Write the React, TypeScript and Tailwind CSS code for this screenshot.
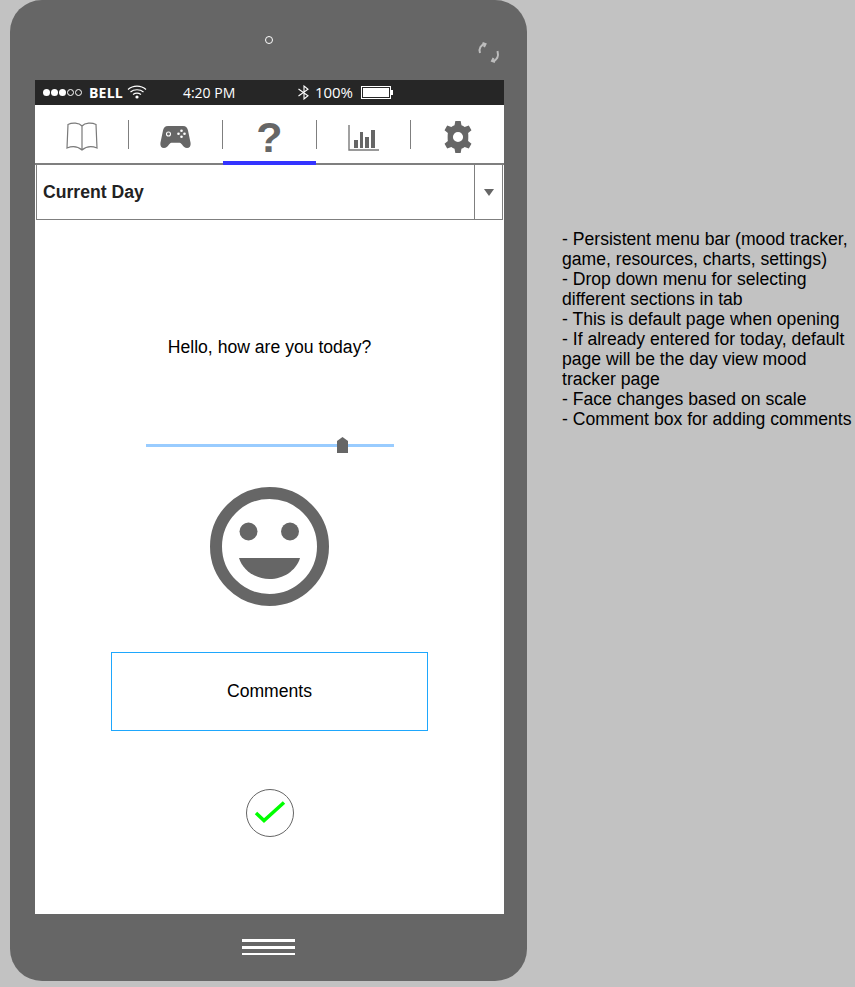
import React from "react";

const arial = "font-['Liberation_Sans',Arial,sans-serif]";

const TabDivider = () => <div className="w-px h-[29px] bg-[#7f7f7f] self-start mt-[15px]" />;

const StatusBar = () => (
  <div className="h-[25px] bg-[#262626] flex items-center text-white shrink-0">
    <div className="flex items-center gap-[1px] ml-[8px]">
      <span className="w-[7px] h-[7px] rounded-full bg-white" />
      <span className="w-[7px] h-[7px] rounded-full bg-white" />
      <span className="w-[7px] h-[7px] rounded-full bg-white" />
      <span className="w-[7px] h-[7px] rounded-full border border-white" />
      <span className="w-[7px] h-[7px] rounded-full border border-white" />
    </div>
    <span className="ml-[7px] text-[14px] font-bold font-['Open_Sans',sans-serif] leading-none tracking-[0.2px]">BELL</span>
    <svg className="ml-[4px] -mt-[2px]" width="20" height="15" viewBox="0 0 20 15" fill="none" stroke="#fff">
      <path d="M1 5.5C6 1 14 1 19 5.5" strokeWidth="1.2" />
      <path d="M3.5 8C7 5 13 5 16.5 8" strokeWidth="1.2" />
      <path d="M6 10.5C8.5 8.8 11.5 8.8 14 10.5" strokeWidth="1.2" />
      <circle cx="10" cy="13" r="1.6" fill="#fff" stroke="none" />
    </svg>
    <span className="ml-[36px] w-[70px] text-[14px] font-['Open_Sans',sans-serif] leading-none">4:20 PM</span>
    <svg className="ml-[44px]" width="14" height="15" viewBox="0 0 14 15" fill="none" stroke="#fff" strokeWidth="1.1">
      <path d="M1.5 4L11 10.8L7 14V1L11 4.2L1.5 11" />
    </svg>
    <span className="ml-[4px] text-[15px] font-['Open_Sans',sans-serif] leading-none">100%</span>
    <div className="ml-[8px] w-[30px] h-[13px] border border-white bg-[#262626] p-[1px]">
      <div className="w-full h-full bg-white" />
    </div>
    <div className="w-[2px] h-[5px] bg-white" />
  </div>
);

const BookIcon = () => (
  <svg width="32" height="32" viewBox="0 0 32 32" fill="none" stroke="#7a7a7a" strokeWidth="1.2">
    <path d="M16 6C13 2.5 6 2.5 2 4.5L1 28C6 26 12 26.5 16 30C20 26.5 26 26 31 28L30 4.5C26 2.5 19 2.5 16 6V30" />
  </svg>
);

const GamepadIcon = () => (
  <svg width="31" height="24" viewBox="0 0 31 24">
    <path fill="#666" d="M8 1H23C26 1 27.5 3 28 5.5L30.6 18C31 21 29.5 23 27 23C24.8 23 23.5 21.5 22 19.5C21 18.2 20 17.8 18.5 17.8H12.5C11 17.8 10 18.2 9 19.5C7.5 21.5 6.2 23 4 23C1.5 23 0 21 .4 18L3 5.5C3.5 3 5 1 8 1Z" />
    <circle cx="8.5" cy="9" r="2" fill="none" stroke="#fff" strokeWidth="1.1" />
    <circle cx="21.5" cy="5.8" r="1.3" fill="#fff" />
    <circle cx="21.5" cy="11.8" r="1.3" fill="#fff" />
    <circle cx="18.5" cy="8.8" r="1.3" fill="#fff" />
    <circle cx="24.5" cy="8.8" r="1.3" fill="#fff" />
  </svg>
);

const ChartIcon = () => (
  <svg width="31" height="26" viewBox="0 0 31 26">
    <path d="M1 0V25H31" fill="none" stroke="#7a7a7a" strokeWidth="1.4" />
    <rect x="6" y="15" width="4" height="8" fill="#666" />
    <rect x="12" y="7" width="3" height="16" fill="#666" />
    <rect x="17" y="12" width="4" height="11" fill="#666" />
    <rect x="23" y="5" width="4" height="18" fill="#666" />
  </svg>
);

const GearIcon = () => (
  <svg width="32" height="32" viewBox="0 0 24 24">
    <path fill="#666" fillRule="evenodd" d="M10 0H14L14.6 3.2C15.5 3.5 16.3 3.9 17 4.5L20.1 3.4L22.1 6.9L19.6 9C19.8 10 19.8 14 19.6 15L22.1 17.1L20.1 20.6L17 19.5C16.3 20.1 15.5 20.5 14.6 20.8L14 24H10L9.4 20.8C8.5 20.5 7.7 20.1 7 19.5L3.9 20.6L1.9 17.1L4.4 15C4.2 14 4.2 10 4.4 9L1.9 6.9L3.9 3.4L7 4.5C7.7 3.9 8.5 3.5 9.4 3.2ZM12 8.2A3.8 3.8 0 1 0 12 15.8A3.8 3.8 0 1 0 12 8.2Z" />
  </svg>
);

const TabBar = () => (
  <div className="h-[60px] bg-white border-b-[2px] border-[#7f7f7f] flex shrink-0 relative">
    <div className="w-[93px] flex justify-center pt-[15px]"><BookIcon /></div>
    <TabDivider />
    <div className="w-[93px] flex justify-center pt-[20px]"><GamepadIcon /></div>
    <TabDivider />
    <div className="w-[93px] flex justify-center relative">
      <span className={`${arial} font-bold text-[43px] leading-[64px] text-[#666]`}>?</span>
      <div className="absolute left-0 right-0 -bottom-[2px] h-[4px] bg-[#3333ff]" />
    </div>
    <TabDivider />
    <div className="w-[93px] flex justify-center pt-[20px]"><ChartIcon /></div>
    <TabDivider />
    <div className="flex-1 flex justify-center pt-[16px]"><GearIcon /></div>
  </div>
);

const Dropdown = () => (
  <div className="h-[55px] ml-[1px] mr-[1px] border border-[#7f7f7f] border-t-0 flex shrink-0 bg-white">
    <div className={`flex-1 pl-[6px] flex items-center ${arial} font-bold text-[17.6px] text-[#222]`}>Current Day</div>
    <div className="w-[28px] border-l border-[#7f7f7f] flex items-center justify-center">
      <div className="w-0 h-0 border-l-[5px] border-r-[5px] border-t-[7px] border-l-transparent border-r-transparent border-t-[#666]" />
    </div>
  </div>
);

const Face = () => (
  <svg width="119" height="119" viewBox="0 0 119 119">
    <circle cx="59.5" cy="59.5" r="53.5" fill="#fff" stroke="#666" strokeWidth="12" />
    <circle cx="38.5" cy="44.5" r="9" fill="#666" />
    <circle cx="80" cy="44.5" r="9" fill="#666" />
    <path d="M29 71H90C86 84 73 92 59.5 92C46 92 33 84 29 71Z" fill="#666" />
  </svg>
);

const CheckButton = () => (
  <div className="w-[48px] h-[48px] rounded-full border border-[#666] flex items-center justify-center">
    <svg width="32" height="24" viewBox="0 0 32 24" fill="none">
      <path d="M2 12L10 19.5L30 1.5" stroke="#00ff00" strokeWidth="3.5" />
    </svg>
  </div>
);

const Screen = () => (
  <div className="w-[469px] h-[834px] ml-[25px] flex flex-col bg-white">
    <StatusBar />
    <TabBar />
    <Dropdown />
    <div className={`flex-1 flex flex-col items-center ${arial} text-black`}>
      <div className="mt-[116px] text-[17.6px] leading-[22px]">Hello, how are you today?</div>
      <div className="mt-[86px] w-[248px] h-[3px] bg-[#99ccff] relative">
        <svg className="absolute left-[191px] -top-[7px]" width="11" height="16" viewBox="0 0 11 16">
          <path d="M5.5 0L11 4V16H0V4Z" fill="#666" />
        </svg>
      </div>
      <div className="mt-[40px]"><Face /></div>
      <div className="mt-[46px] w-[317px] h-[79px] border border-[#1ea7fd] flex items-center justify-center text-[17.6px]">Comments</div>
      <div className="mt-[58px]"><CheckButton /></div>
    </div>
  </div>
);

const notes = [
  "- Persistent menu bar (mood tracker, game, resources, charts, settings)",
  "- Drop down menu for selecting different sections in tab",
  "- This is default page when opening",
  "- If already entered for today, default page will be the day view mood tracker page",
  "- Face changes based on scale",
  "- Comment box for adding comments",
];

export default function App() {
  return (
    <div className="w-[855px] h-[987px] bg-[#c2c2c2] flex items-start overflow-hidden">
      <div className="w-[517px] h-[981px] ml-[10px] bg-[#666] rounded-[32px] flex flex-col shrink-0 relative">
        <div className="h-[80px] relative shrink-0">
          <div className="absolute left-[255px] top-[36px] w-[8px] h-[8px] rounded-full border border-white bg-[#666]" />
          <svg className="absolute left-[467px] top-[42px]" width="23" height="21" viewBox="0 0 23 21" fill="none" stroke="#bdbdbd" strokeWidth="2">
            <path d="M8 2C4 3 1.5 6 3 11" />
            <path d="M5.5 1L8.5 2L7 5" />
            <path d="M16 19C20 18 22 15 20.5 9" />
            <path d="M18 20L15 19L16.5 16" />
          </svg>
        </div>
        <Screen />
        <div className="flex-1 flex flex-col items-center gap-[2px] pt-[25px] pr-[1px]">
          <div className="w-[53px] h-[2.5px] bg-white" />
          <div className="w-[53px] h-[3px] bg-white mt-[2px]" />
          <div className="w-[53px] h-[2.5px] bg-white mt-[2px]" />
        </div>
      </div>
      <div className={`w-[292px] ml-[35px] mt-[229px] ${arial} text-[17.6px] leading-[20px] text-black`}>
        {notes.map((n) => (
          <div key={n}>{n}</div>
        ))}
      </div>
    </div>
  );
}
